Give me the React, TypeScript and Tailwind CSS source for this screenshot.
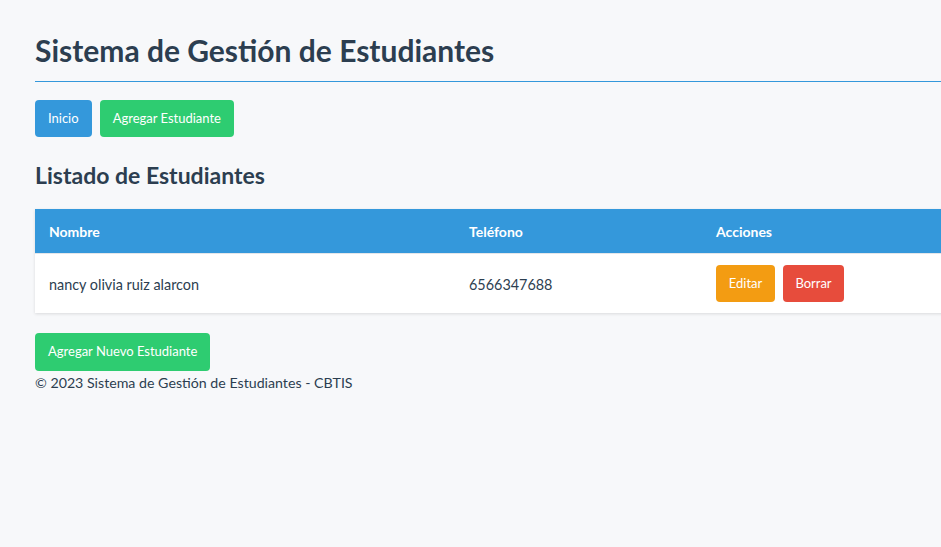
export default function App() {
  const estudiantes = [{ nombre: "nancy olivia ruiz alarcon", telefono: "6566347688" }];

  return (
    <div className="min-h-screen w-full overflow-hidden bg-[#f7f8fa] font-['Lato','Noto_Sans',sans-serif] text-[#2c3e50]">
      <div className="w-[1100px] pl-[35px] pt-[29px]">
        {/* Header */}
        <h1 className="border-b border-[#3498db] pb-[10px] text-[30px] font-bold leading-[42px] text-[#2c3e50]">
          Sistema de Gestión de Estudiantes
        </h1>

        <nav className="mt-[18px] flex gap-2">
          <button className="h-[37px] rounded bg-[#3498db] px-[13px] text-[13px] text-white">Inicio</button>
          <button className="h-[37px] rounded bg-[#2ecc71] px-[13px] text-[13px] text-white">Agregar Estudiante</button>
        </nav>

        <h2 className="mt-[22px] text-[23px] font-bold leading-[32px] text-[#2c3e50]">Listado de Estudiantes</h2>

        {/* Table */}
        <table className="mt-[18px] w-full border-collapse bg-white text-left text-[14px] shadow-[0_1px_3px_rgba(0,0,0,0.12)]">
          <thead>
            <tr className="h-[44px] bg-[#3498db] text-white">
              <th className="w-[420px] px-[14px] pt-[2px] font-bold">Nombre</th>
              <th className="w-[247px] px-[14px] pt-[2px] font-bold">Teléfono</th>
              <th className="px-[14px] pt-[2px] font-bold">Acciones</th>
            </tr>
          </thead>
          <tbody>
            {estudiantes.map((e) => (
              <tr key={e.telefono} className="h-[60px] border-t border-[#e3e6ea] text-[14.4px] text-[#2c3e50]">
                <td className="px-[14px] pt-[3px]">{e.nombre}</td>
                <td className="px-[14px] pt-[3px]">{e.telefono}</td>
                <td className="px-[14px]">
                  <div className="flex gap-2">
                    <button className="h-[37px] w-[59px] rounded bg-[#f39c12] text-[13px] text-white">Editar</button>
                    <button className="h-[37px] w-[61px] rounded bg-[#e74c3c] text-[13px] text-white">Borrar</button>
                  </div>
                </td>
              </tr>
            ))}
          </tbody>
        </table>

        <button className="mt-[20px] h-[38px] rounded bg-[#2ecc71] px-[13px] text-[13px] text-white">
          Agregar Nuevo Estudiante
        </button>

        <footer className="mt-[2px] text-[14.2px] leading-[20px] text-[#2c3e50]">
          © 2023 Sistema de Gestión de Estudiantes - CBTIS
        </footer>
      </div>
    </div>
  );
}
